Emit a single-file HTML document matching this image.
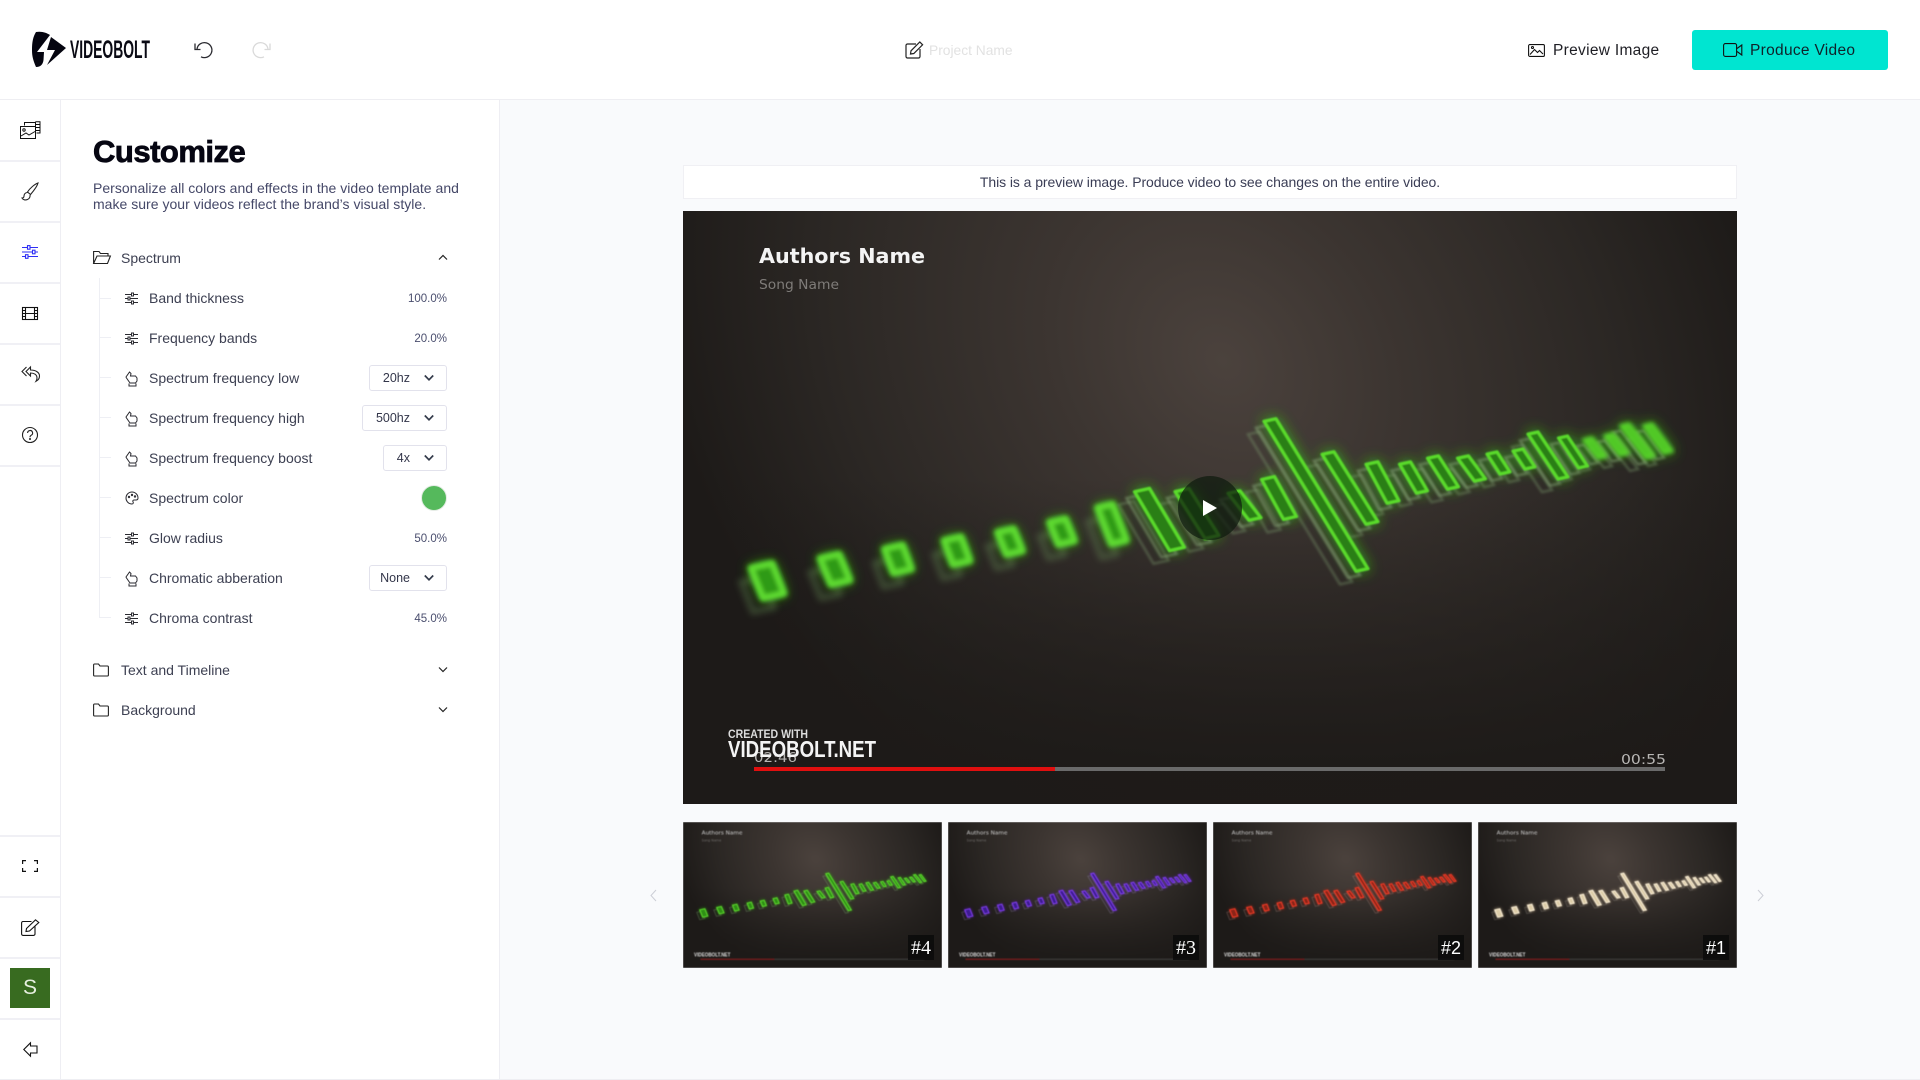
<!DOCTYPE html>
<html><head><meta charset="utf-8"><title>Customize</title>
<style>
*{box-sizing:border-box}
html,body{margin:0;width:1920px;height:1080px;overflow:hidden;background:#fff;font-family:"Liberation Sans",sans-serif;color:#333}
.a{position:absolute}
.t{position:absolute;white-space:nowrap}
.l{position:absolute;left:149px;font-size:14px;line-height:18px;color:#3d4052;white-space:nowrap}
.v{position:absolute;right:1473px;font-size:11.5px;line-height:16px;color:#4a4e6e;white-space:nowrap}
.s{position:absolute;height:26px;right:1473px;border:1px solid #e2e2ec;border-radius:3px;background:#fff}
.s span{position:absolute;right:36px;top:3px;font-size:12.5px;line-height:18px;color:#33364a}
.s svg{position:absolute;right:12px;top:8px}
.h{position:absolute;left:0;width:60px;height:2px;background:#f0f0f5}
.sep{position:absolute;left:100px;width:11px;height:1px;background:#eeeff4}
svg{position:absolute;overflow:visible}
.th{position:absolute;top:822px;width:259px;height:146px;overflow:hidden}
.th svg{left:0;top:0;overflow:hidden;filter:blur(.45px)}
.bd{position:absolute;bottom:8px;right:8px;width:26px;height:25px;background:rgba(10,10,10,.85);color:#fff;font-size:18px;line-height:27px;text-align:center}
</style></head><body>

<!-- main background -->
<div class="a" style="left:500px;top:100px;width:1420px;height:979px;background:#f9fafc"></div>
<div class="a" style="left:0;top:99px;width:1920px;height:1px;background:#eeeef2"></div>
<div class="a" style="left:0;top:1079px;width:1920px;height:1px;background:#eeeef2"></div>
<div class="a" style="left:60px;top:100px;width:1px;height:979px;background:#eeeef3"></div>
<div class="a" style="left:499px;top:100px;width:1px;height:979px;background:#eeeef3"></div>

<!-- logo -->
<svg style="left:0;top:0" width="200" height="99" viewBox="0 0 200 99">
<path fill="#050510" d="M36 32C42 31 47 33 50 35L37 52L44 52L43.500 60C43 64 41 67 36 67C33 60 32 56 32 50C32 42 33 37 36 32Z"/>
<path fill="#050510" d="M51 37L66 48L47 65L55 50L47 50Z"/>
<text x="70" y="58" font-family="Liberation Sans" font-weight="700" font-size="25" fill="#0a0a14" textLength="80" lengthAdjust="spacingAndGlyphs">VIDEOBOLT</text>
</svg>
<!-- undo / redo -->
<svg style="left:193px;top:41px" width="20" height="18" viewBox="0 0 20 18" fill="none" stroke="#2a2a30" stroke-width="1.300"><path d="M4 8A7.500 7.500 0 1 1 8 15.800"/><path d="M2 2.500V8.500H7.500"/></svg>
<svg style="left:252px;top:41px" width="20" height="18" viewBox="0 0 20 18" fill="none" stroke="#d9d9d9" stroke-width="1.300"><path d="M16 8A7.500 7.500 0 1 0 12 15.800"/><path d="M18 2.500V8.500H12.500"/></svg>
<!-- project name -->
<svg style="left:905px;top:41px" width="19" height="18" viewBox="0 0 19 18" fill="none" stroke="#222" stroke-width="1.200"><path d="M11 3H2.500A1.500 1.500 0 0 0 1 4.500V15.500A1.500 1.500 0 0 0 2.500 17H13.500A1.500 1.500 0 0 0 15 15.500V8"/><path d="M5.500 13L6 9.800L14.800 1L17.600 3.800L8.800 12.500Z"/></svg>
<div class="t" style="left:929px;top:43px;font-size:13.800px;line-height:16px;color:#e2e2e2">Project Name</div>
<!-- preview -->
<svg style="left:1528px;top:44px" width="17" height="13" viewBox="0 0 17 13" fill="none" stroke="#111" stroke-width="1.100"><rect x=".6" y=".6" width="15.800" height="11.800" rx="1.200"/><path d="M2 10.500L6.500 5.500L9.500 8.500L11.500 6.500L15 10"/><circle cx="4.500" cy="3.500" r="1"/></svg>
<div class="t" style="left:1553px;top:42px;font-size:15.5px;line-height:18px;letter-spacing:.3px;color:#1e1e24">Preview Image</div>
<div class="a" style="left:1692px;top:30px;width:196px;height:40px;background:#00e5d1;border-radius:3px"></div>
<svg style="left:1723px;top:43px" width="20" height="14" viewBox="0 0 20 14" fill="none" stroke="#111" stroke-width="1.100"><rect x=".6" y=".6" width="13" height="12.800" rx="1.800"/><path d="M14 5.500L18.800 2V12L14 8.500"/></svg>
<div class="t" style="left:1750px;top:42px;font-size:15.5px;line-height:18px;letter-spacing:.3px;color:#10222a">Produce Video</div>

<!-- rail separators -->
<div class="h" style="top:160px"></div><div class="h" style="top:221px"></div><div class="h" style="top:282px"></div><div class="h" style="top:343px"></div><div class="h" style="top:404px"></div><div class="h" style="top:465px"></div>
<div class="h" style="top:835px"></div><div class="h" style="top:896px"></div><div class="h" style="top:957px"></div><div class="h" style="top:1018px"></div>

<!-- rail icons -->
<svg style="left:20px;top:121px" width="21" height="18" viewBox="0 0 21 18" fill="none" stroke="#111" stroke-width="1"><path d="M4.500 4.500V1.500H15"/><path d="M15.500 .8H20V12H16.500M15.500 .8V5M16 3.500H20M16 6.500H20M16 9.500H20"/><rect x=".5" y="5.500" width="15" height="12"/><circle cx="4" cy="9" r="1.200"/><path d="M1 15L6 12L9 14L15 10.500"/></svg>
<svg style="left:21px;top:182px" width="18" height="19" viewBox="0 0 18 19" fill="none" stroke="#222" stroke-width="1.100"><path d="M17 1C14 2 9 6 6.500 10L9.500 12.500C12.500 9 16 5 17 1Z"/><path d="M6.500 10.500C4 10.500 3 12.500 3 14C3 15.500 2 16 1 16C2 18 4.500 18.300 6.500 17.500C8.500 16.700 9.500 14.500 9 12.800"/></svg>
<svg style="left:22px;top:245px" width="16" height="14" viewBox="0 0 16 14" fill="none" stroke="#2f2ff5" stroke-width="1.100"><path d="M0 2.500H16M0 7H16M0 11.500H16"/><rect x="5.500" y="0.600" width="2.500" height="3.600" fill="#fff"/><rect x="10.500" y="5.200" width="2.500" height="3.600" fill="#fff"/><rect x="3.500" y="9.700" width="2.500" height="3.600" fill="#fff"/></svg>
<svg style="left:22px;top:307px" width="16" height="13" viewBox="0 0 16 13" fill="none" stroke="#111" stroke-width="1.100"><rect x=".5" y=".5" width="15" height="12"/><path d="M3.500 .5V12.500M12.500 .5V12.500M.5 3.500H3.500M.5 6.500H15.500M.5 9.500H3.500M12.500 3.500H15.500M12.500 9.500H15.500"/></svg>
<svg style="left:21px;top:366px" width="19" height="16" viewBox="0 0 19 16" fill="none" stroke="#222" stroke-width="1.100"><path d="M5.500 1L1 5.500L5.500 10M9.500 1L5 5.500L9.500 10V7C13 7 16 8.500 16 12C16 13.500 15.500 14.500 15 15.300C17.500 14 18.500 12 18.500 10C18.500 6 14 4 9.500 4Z"/></svg>
<svg style="left:22px;top:427px" width="16" height="16" viewBox="0 0 16 16" fill="none" stroke="#222" stroke-width="1.100"><circle cx="8" cy="8" r="7.500"/><path d="M5.600 6A2.500 2.500 0 1 1 9.300 8.200C8.400 8.700 8 9.200 8 10.200"/><circle cx="8" cy="12" r=".5" fill="#222"/></svg>
<svg style="left:22px;top:860px" width="16" height="12" viewBox="0 0 16 12" fill="none" stroke="#111" stroke-width="1.200"><path d="M4 .6H.6V4M12 .6H15.400V4M.6 8V11.400H4M15.400 8V11.400H12"/></svg>
<svg style="left:21px;top:919px" width="19" height="17" viewBox="0 0 19 17" fill="none" stroke="#111" stroke-width="1.100"><path d="M10.500 2.500H2A1.500 1.500 0 0 0 .6 4V15A1.500 1.500 0 0 0 2 16.400H12.500A1.500 1.500 0 0 0 14 15V7.500"/><path d="M5 12.500L5.500 9.500L14.500 .8L17.800 3.500L8.500 12Z"/></svg>
<div class="a" style="left:10px;top:968px;width:40px;height:40px;background:#386b20;color:#e6efe0;font-size:21px;line-height:40px;text-align:center">S</div>
<svg style="left:23px;top:1042px" width="15" height="15" viewBox="0 0 15 15" fill="none" stroke="#111" stroke-width="1.100"><path d="M7.500 .8L.8 7.500L7.500 14.200V11H14V4H7.500Z"/></svg>

<!-- customize panel -->
<div class="t" style="left:93px;top:134px;font-size:31px;line-height:36px;font-weight:700;color:#060612;-webkit-text-stroke:.8px #060612;letter-spacing:-.5px">Customize</div>
<div class="t" style="left:93px;top:180px;font-size:14px;line-height:16px;letter-spacing:.02px;color:#454868">Personalize all colors and effects in the video template and<br>make sure your videos reflect the brand’s visual style.</div>

<svg style="left:93px;top:250px" width="18" height="15" viewBox="0 0 18 15" fill="none" stroke="#222" stroke-width="1.100"><path d="M.6 13.500V1.500H6L7.500 3.500H15V6M.6 13.500L4 6H17.400L14.500 13.500Z"/></svg>
<div class="t" style="left:121px;top:249px;font-size:14px;line-height:18px;color:#3d4052">Spectrum</div>
<svg style="left:438px;top:254px" width="10" height="7" viewBox="0 0 10 7" fill="none" stroke="#222" stroke-width="1.200"><path d="M1 5.500L5 1.500L9 5.500"/></svg>

<!-- tree -->
<div class="a" style="left:99px;top:278px;width:1px;height:340px;background:#eeeff4"></div>
<div class="sep" style="top:298px"></div><div class="sep" style="top:337px"></div><div class="sep" style="top:377px"></div><div class="sep" style="top:417px"></div><div class="sep" style="top:457px"></div><div class="sep" style="top:497px"></div><div class="sep" style="top:537px"></div><div class="sep" style="top:577px"></div><div class="sep" style="top:617px"></div>

<svg width="0" height="0" style="left:0;top:0"><defs>
<g id="sl" fill="none" stroke="#2a2a30" stroke-width="1"><path d="M0 2.500H13M0 6.500H13M0 10.500H13"/><rect x="6.500" y="1" width="2" height="3" fill="#fff"/><rect x="3" y="5" width="2" height="3" fill="#fff"/><rect x="6.500" y="9" width="2" height="3" fill="#fff"/></g>
<g id="ha" fill="none" stroke="#2a2a30" stroke-width="1"><path d="M1 6L4.500 1L6 2.500L5.500 5H10.500L12 7V10L10.500 12H5L1.500 7ZM4 12.500V15H11V12.500"/></g>
<radialGradient id="beam" gradientUnits="userSpaceOnUse" cx="0" cy="0" r="1" gradientTransform="translate(540 150) rotate(-40) scale(520 640)"><stop offset="0" stop-color="#4b423d"/><stop offset=".3" stop-color="#3c3531"/><stop offset=".7" stop-color="#2b2724"/><stop offset="1" stop-color="#1d1a18"/></radialGradient>
<linearGradient id="fade" x1="0" y1="0" x2="0" y2="1"><stop offset=".45" stop-color="#1d1a18" stop-opacity="0"/><stop offset=".95" stop-color="#1d1a18" stop-opacity=".95"/></linearGradient>
<filter id="gl" x="-20%" y="-20%" width="140%" height="140%"><feGaussianBlur stdDeviation="7"/></filter>
<filter id="sf" x="-5%" y="-5%" width="110%" height="110%"><feGaussianBlur stdDeviation=".7"/></filter>
<filter id="sb" x="-5%" y="-20%" width="110%" height="140%"><feGaussianBlur stdDeviation="2.200"/></filter>
<filter id="gh" x="-20%" y="-20%" width="140%" height="140%"><feGaussianBlur stdDeviation="1.300"/></filter>
<filter id="gb" x="-20%" y="-20%" width="140%" height="140%"><feGaussianBlur stdDeviation="3.500"/></filter>
<g id="bl">
<polygon points="68,357 89,352.400 101,382.400 80,387"/><polygon points="137,347.400 156,343.200 167,369.200 148,373.400"/><polygon points="201.500,338 219.500,334 228.500,358 210.500,362"/><polygon points="261,329.500 278,325.800 287,349.800 270,353.500"/><polygon points="314.500,321.300 330.500,317.800 339.500,339.800 323.500,343.300"/><polygon points="366.500,311.300 382.500,307.800 391.500,329.800 375.500,333.300"/><polygon points="414.500,296.700 429.500,293.300 443.500,329.300 428.500,332.700"/>
</g>
<g id="bm">
<polygon points="451.500,280.700 466.500,277.300 501.500,336.300 486.500,339.700"/><polygon points="492,280.600 506,277.400 536,324.400 522,327.600"/><polygon points="545,282.300 557,279.700 578,306.700 566,309.300"/><polygon points="578.500,268.500 591.500,265.500 613.500,305.500 600.500,308.500"/><polygon points="581,210.300 593,207.700 685,357.700 673,360.300"/><polygon points="639,243.300 651,240.700 695,310.700 683,313.300"/><polygon points="683,253.300 695,250.700 716,289.700 704,292.300"/><polygon points="716.500,253.200 727.500,250.800 744.500,279.800 733.500,282.200"/><polygon points="744.500,247.200 755.500,244.800 775.500,275.800 764.500,278.200"/><polygon points="774.500,247.200 785.500,244.800 802.500,267.800 791.500,270.200"/><polygon points="804,243.100 814,240.900 827,260.900 817,263.100"/><polygon points="830,240.100 840,237.900 852,255.900 842,258.100"/><polygon points="845,223.100 855,220.900 885,265.900 875,268.100"/><polygon points="875.500,227 884.500,225 904.500,255 895.500,257"/>
</g>
<g id="be">
<polygon points="901,228.900 909,227.100 923,245.100 915,246.900"/><polygon points="922,224.900 930,223.100 945,242.100 937,243.900"/><polygon points="938,214.900 946,213.100 971,245.100 963,246.900"/><polygon points="961,214.900 969,213.100 989,240.100 981,241.900"/>
</g>
<g id="o"><use href="#bl"/><use href="#bm"/><use href="#be"/></g>
<g id="bg">
<rect width="1054" height="593" fill="#1d1a18"/>
<rect width="1054" height="593" fill="url(#beam)"/>
<rect width="1054" height="593" fill="url(#fade)"/>
</g>
</defs></svg>

<!-- rows -->
<svg style="left:125px;top:292px" width="14" height="14"><use href="#sl"/></svg>
<div class="l" style="top:289px">Band thickness</div><div class="v" style="top:291px">100.0%</div>
<svg style="left:125px;top:332px" width="14" height="14"><use href="#sl"/></svg>
<div class="l" style="top:329px">Frequency bands</div><div class="v" style="top:331px">20.0%</div>
<svg style="left:125px;top:371px" width="14" height="16"><use href="#ha"/></svg>
<div class="l" style="top:369px">Spectrum frequency low</div>
<div class="s" style="top:365px;width:78px"><span>20hz</span><svg width="10" height="8" viewBox="0 0 10 8" fill="none" stroke="#333a4a" stroke-width="1.700"><path d="M.8 1.500L5 5.800L9.200 1.500"/></svg></div>
<svg style="left:125px;top:411px" width="14" height="16"><use href="#ha"/></svg>
<div class="l" style="top:409px">Spectrum frequency high</div>
<div class="s" style="top:405px;width:85px"><span>500hz</span><svg width="10" height="8" viewBox="0 0 10 8" fill="none" stroke="#333a4a" stroke-width="1.700"><path d="M.8 1.500L5 5.800L9.200 1.500"/></svg></div>
<svg style="left:125px;top:451px" width="14" height="16"><use href="#ha"/></svg>
<div class="l" style="top:449px">Spectrum frequency boost</div>
<div class="s" style="top:445px;width:64px"><span>4x</span><svg width="10" height="8" viewBox="0 0 10 8" fill="none" stroke="#333a4a" stroke-width="1.700"><path d="M.8 1.500L5 5.800L9.200 1.500"/></svg></div>
<svg style="left:125px;top:491px" width="14" height="14" viewBox="0 0 14 14" fill="none" stroke="#2a2a30" stroke-width="1"><path d="M7 1A6 6 0 0 0 7 13C8.500 13 8.500 11.500 8 10.800C7.500 10 8 9 9 9H11C12.500 9 13 8 13 7A6 6 0 0 0 7 1Z"/><circle cx="4" cy="6" r=".7"/><circle cx="7" cy="4" r=".7"/><circle cx="10" cy="5.500" r=".7"/></svg>
<div class="l" style="top:489px">Spectrum color</div>
<div class="a" style="left:421px;top:485px;width:26px;height:26px;border-radius:50%;background:#55b95c;border:1px solid #e6ece6"></div>
<svg style="left:125px;top:532px" width="14" height="14"><use href="#sl"/></svg>
<div class="l" style="top:529px">Glow radius</div><div class="v" style="top:531px">50.0%</div>
<svg style="left:125px;top:571px" width="14" height="16"><use href="#ha"/></svg>
<div class="l" style="top:569px">Chromatic abberation</div>
<div class="s" style="top:565px;width:78px"><span>None</span><svg width="10" height="8" viewBox="0 0 10 8" fill="none" stroke="#333a4a" stroke-width="1.700"><path d="M.8 1.500L5 5.800L9.200 1.500"/></svg></div>
<svg style="left:125px;top:612px" width="14" height="14"><use href="#sl"/></svg>
<div class="l" style="top:609px">Chroma contrast</div><div class="v" style="top:611px">45.0%</div>

<svg style="left:93px;top:663px" width="16" height="14" viewBox="0 0 16 14" fill="none" stroke="#222" stroke-width="1.100"><path d="M.6 2A1 1 0 0 1 1.500 1H5.500L7 3H14.500A1 1 0 0 1 15.400 4V12A1 1 0 0 1 14.500 13H1.500A1 1 0 0 1 .6 12Z"/></svg>
<div class="t" style="left:121px;top:661px;font-size:14px;line-height:18px;color:#3d4052">Text and Timeline</div>
<svg style="left:438px;top:666px" width="10" height="7" viewBox="0 0 10 7" fill="none" stroke="#222" stroke-width="1.200"><path d="M1 1.500L5 5.500L9 1.500"/></svg>
<svg style="left:93px;top:703px" width="16" height="14" viewBox="0 0 16 14" fill="none" stroke="#222" stroke-width="1.100"><path d="M.6 2A1 1 0 0 1 1.500 1H5.500L7 3H14.500A1 1 0 0 1 15.400 4V12A1 1 0 0 1 14.500 13H1.500A1 1 0 0 1 .6 12Z"/></svg>
<div class="t" style="left:121px;top:701px;font-size:14px;line-height:18px;color:#3d4052">Background</div>
<svg style="left:438px;top:706px" width="10" height="7" viewBox="0 0 10 7" fill="none" stroke="#222" stroke-width="1.200"><path d="M1 1.500L5 5.500L9 1.500"/></svg>

<!-- notice -->
<div class="a" style="left:683px;top:165px;width:1054px;height:34px;background:#fff;border:1px solid #f0f0f4;font-size:14px;line-height:32px;letter-spacing:-.07px;text-align:center;color:#3a3d55">This is a preview image. Produce video to see changes on the entire video.</div>

<!-- main video -->
<svg style="left:683px;top:211px;overflow:hidden" width="1054" height="593" viewBox="0 0 1054 593">
<use href="#bg"/>
<g stroke="#35b815" fill="#35b815" stroke-width="4" filter="url(#gl)" opacity=".8"><use href="#o"/></g>
<g stroke="#45c820" fill="#45c820" stroke-width="6" filter="url(#gb)" opacity=".6"><use href="#bl"/></g>
<g fill="none" stroke="#6f9a5c" stroke-width="5" opacity=".4" filter="url(#gb)" transform="translate(-10 14)"><use href="#bl"/></g>
<g fill="none" stroke="#7f9f70" stroke-width="2.500" opacity=".4" filter="url(#gh)" transform="translate(-16 13)"><use href="#bm"/><use href="#be"/></g>
<g fill="none" stroke="#8fb080" stroke-width="2.500" opacity=".5" filter="url(#gh)" transform="translate(-8 6.500)"><use href="#bm"/><use href="#be"/></g>
<g filter="url(#sb)" stroke="#5fdc30" fill="#2f9a15" stroke-width="6" stroke-linejoin="round"><use href="#bl"/></g>
<g filter="url(#sf)" stroke="#5adc2c" fill="#2c7f14" stroke-width="3.200" stroke-linejoin="round"><use href="#bm"/></g>
<g filter="url(#sb)" stroke="#58d42a" fill="#4cc022" stroke-width="4" stroke-linejoin="round"><use href="#be"/></g>
<text x="76" y="52" font-family="DejaVu Sans" font-weight="700" font-size="20" fill="#f4f4f4" textLength="166" lengthAdjust="spacingAndGlyphs">Authors Name</text>
<text x="76" y="78" font-family="DejaVu Sans" font-size="13" fill="#7f7c79" textLength="80" lengthAdjust="spacingAndGlyphs">Song Name</text>
<text x="71" y="551" font-family="DejaVu Sans" font-size="13" fill="#b8b6b4" textLength="43" lengthAdjust="spacingAndGlyphs">02:46</text>
<text x="45" y="527" font-family="Liberation Sans" font-weight="700" font-size="11.500" fill="#dcdcdc" textLength="80" lengthAdjust="spacingAndGlyphs">CREATED WITH</text>
<text x="45" y="546" font-family="Liberation Sans" font-weight="700" font-size="23" fill="#f4f4f4" textLength="148" lengthAdjust="spacingAndGlyphs">VIDEOBOLT.NET</text>
<text x="938" y="553" font-family="DejaVu Sans" font-size="13" fill="#b8b6b4" textLength="45" lengthAdjust="spacingAndGlyphs">00:55</text>
<rect x="71" y="556" width="911" height="4" fill="#6a6a6a"/>
<rect x="71" y="556" width="301" height="4" fill="#e00f0f"/>
<circle cx="527" cy="297" r="32" fill="#0e1a0e" fill-opacity=".72"/>
<path d="M520 289L534 297L520 305Z" fill="#fff"/>
</svg>

<!-- thumbs -->
<svg style="left:648px;top:888px" width="11" height="15" viewBox="0 0 11 15" fill="none" stroke="#ccced6" stroke-width="1"><path d="M8 2L3 7.500L8 13"/></svg>
<svg style="left:1755px;top:888px" width="11" height="15" viewBox="0 0 11 15" fill="none" stroke="#ccced6" stroke-width="1"><path d="M3 2L8 7.500L3 13"/></svg>

<div class="th" style="left:683px"><svg width="259" height="146" viewBox="0 0 1054 593"><use href="#bg"/><g stroke="#2fae12" fill="#2fae12" stroke-width="4" filter="url(#gl)" opacity=".75"><use href="#o"/></g><g stroke="#7f9f70" fill="none" stroke-width="4" opacity=".35" transform="translate(-12 10)"><use href="#o"/></g><g stroke="#5ad42b" fill="#2f8f15" stroke-width="4.500"><use href="#o"/></g>
<text x="76" y="51" font-family="DejaVu Sans" font-size="20" fill="#cfcfcf" textLength="166" lengthAdjust="spacingAndGlyphs">Authors Name</text><text x="76" y="78" font-family="DejaVu Sans" font-size="13" fill="#6f6c69" textLength="80" lengthAdjust="spacingAndGlyphs">Song Name</text><text x="45" y="546" font-family="Liberation Sans" font-weight="700" font-size="22" fill="#dcdcdc" textLength="148" lengthAdjust="spacingAndGlyphs">VIDEOBOLT.NET</text><rect x="71" y="556" width="911" height="4" fill="#444"/><rect x="71" y="556" width="301" height="4" fill="#8e1414"/></svg><div class="bd" style="font-family:'Liberation Serif',serif;font-size:20px">#4</div></div>

<div class="th" style="left:948px"><svg width="259" height="146" viewBox="0 0 1054 593"><use href="#bg"/><g stroke="#5a1fc8" fill="#5a1fc8" stroke-width="4" filter="url(#gl)" opacity=".7"><use href="#o"/></g><g stroke="#8a80a0" fill="none" stroke-width="4" opacity=".35" transform="translate(-12 10)"><use href="#o"/></g><g stroke="#7d3be8" fill="#3d1c90" stroke-width="4.500"><use href="#o"/></g>
<text x="76" y="51" font-family="DejaVu Sans" font-size="20" fill="#cfcfcf" textLength="166" lengthAdjust="spacingAndGlyphs">Authors Name</text><text x="76" y="78" font-family="DejaVu Sans" font-size="13" fill="#6f6c69" textLength="80" lengthAdjust="spacingAndGlyphs">Song Name</text><text x="45" y="546" font-family="Liberation Sans" font-weight="700" font-size="22" fill="#dcdcdc" textLength="148" lengthAdjust="spacingAndGlyphs">VIDEOBOLT.NET</text><rect x="71" y="556" width="911" height="4" fill="#444"/><rect x="71" y="556" width="301" height="4" fill="#8e1414"/></svg><div class="bd" style="font-family:'Liberation Serif',serif;font-size:20px">#3</div></div>

<div class="th" style="left:1213px"><svg width="259" height="146" viewBox="0 0 1054 593"><use href="#bg"/><g stroke="#d02a1a" fill="#d02a1a" stroke-width="4" filter="url(#gl)" opacity=".7"><use href="#o"/></g><g stroke="#a08078" fill="none" stroke-width="4" opacity=".35" transform="translate(-12 10)"><use href="#o"/></g><g stroke="#ee3a25" fill="#8a2418" stroke-width="4.500"><use href="#o"/></g>
<text x="76" y="51" font-family="DejaVu Sans" font-size="20" fill="#cfcfcf" textLength="166" lengthAdjust="spacingAndGlyphs">Authors Name</text><text x="76" y="78" font-family="DejaVu Sans" font-size="13" fill="#6f6c69" textLength="80" lengthAdjust="spacingAndGlyphs">Song Name</text><text x="45" y="546" font-family="Liberation Sans" font-weight="700" font-size="22" fill="#dcdcdc" textLength="148" lengthAdjust="spacingAndGlyphs">VIDEOBOLT.NET</text><rect x="71" y="556" width="911" height="4" fill="#444"/><rect x="71" y="556" width="301" height="4" fill="#8e1414"/></svg><div class="bd">#2</div></div>

<div class="th" style="left:1478px"><svg width="259" height="146" viewBox="0 0 1054 593"><use href="#bg"/><g stroke="#d8c098" fill="#d8c098" stroke-width="4" filter="url(#gl)" opacity=".75"><use href="#o"/></g><g stroke="#a09a90" fill="none" stroke-width="4" opacity=".3" transform="translate(-12 10)"><use href="#o"/></g><g stroke="#f6ead2" fill="#dccca8" stroke-width="4.500"><use href="#o"/></g>
<text x="76" y="51" font-family="DejaVu Sans" font-size="20" fill="#cfcfcf" textLength="166" lengthAdjust="spacingAndGlyphs">Authors Name</text><text x="76" y="78" font-family="DejaVu Sans" font-size="13" fill="#6f6c69" textLength="80" lengthAdjust="spacingAndGlyphs">Song Name</text><text x="45" y="546" font-family="Liberation Sans" font-weight="700" font-size="22" fill="#dcdcdc" textLength="148" lengthAdjust="spacingAndGlyphs">VIDEOBOLT.NET</text><rect x="71" y="556" width="911" height="4" fill="#444"/><rect x="71" y="556" width="301" height="4" fill="#8e1414"/></svg><div class="bd">#1</div></div>

</body></html>
